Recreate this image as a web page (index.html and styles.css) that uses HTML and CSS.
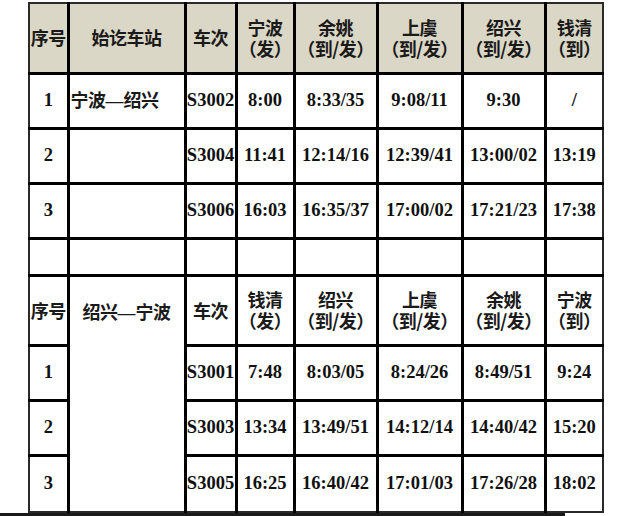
FILE: index.html
```html
<!DOCTYPE html>
<html lang="zh-CN">
<head>
<meta charset="utf-8">
<title>时刻表</title>
<link rel="stylesheet" href="styles.css">
</head>
<body>
<div class="page">
<table class="tt">
<colgroup>
<col class="c1"><col class="c2"><col class="c3"><col class="c4"><col class="c5"><col class="c6"><col class="c7"><col class="c8">
</colgroup>
<tbody>
<tr class="h hbg">
<td class="cn">序号</td><td class="cn">始讫车站</td><td class="cn">车次</td>
<td class="cn">宁波<br>（发）</td><td class="cn">余姚<br>（到/发）</td><td class="cn">上虞<br>（到/发）</td><td class="cn">绍兴<br>（到/发）</td><td class="cn">钱清<br>（到）</td>
</tr>
<tr class="r">
<td>1</td><td class="cn st">宁波<span class="dash">—</span>绍兴</td><td>S3002</td><td>8:00</td><td>8:33/35</td><td>9:08/11</td><td>9:30</td><td>/</td>
</tr>
<tr class="r">
<td>2</td><td></td><td>S3004</td><td>11:41</td><td>12:14/16</td><td>12:39/41</td><td>13:00/02</td><td>13:19</td>
</tr>
<tr class="r">
<td>3</td><td></td><td>S3006</td><td>16:03</td><td>16:35/37</td><td>17:00/02</td><td>17:21/23</td><td>17:38</td>
</tr>
<tr class="gap">
<td></td><td></td><td></td><td></td><td></td><td></td><td></td><td></td>
</tr>
<tr class="h">
<td class="cn">序号</td><td class="cn span" rowspan="4">绍兴<span class="dash">—</span>宁波</td><td class="cn">车次</td>
<td class="cn">钱清<br>（发）</td><td class="cn">绍兴<br>（到/发）</td><td class="cn">上虞<br>（到/发）</td><td class="cn">余姚<br>（到/发）</td><td class="cn">宁波<br>（到）</td>
</tr>
<tr class="r">
<td>1</td><td>S3001</td><td>7:48</td><td>8:03/05</td><td>8:24/26</td><td>8:49/51</td><td>9:24</td>
</tr>
<tr class="r">
<td>2</td><td>S3003</td><td>13:34</td><td>13:49/51</td><td>14:12/14</td><td>14:40/42</td><td>15:20</td>
</tr>
<tr class="r last">
<td>3</td><td>S3005</td><td>16:25</td><td>16:40/42</td><td>17:01/03</td><td>17:26/28</td><td>18:02</td>
</tr>
</tbody>
</table>
<div class="scanline"></div>
</div>
</body>
</html>
```
FILE: styles.css
```css
html, body {
  margin: 0;
  padding: 0;
  background: #ffffff;
}
.page {
  width: 640px;
  height: 516px;
  overflow: hidden;
  padding: 2px 0 0 28px;
  box-sizing: border-box;
  position: relative;
}
.tt {
  border-collapse: collapse;
  table-layout: fixed;
  width: 576px;
  border: 2px solid #2a2a2a;
  font-family: "Liberation Serif", "Times New Roman", serif;
  font-weight: bold;
  font-size: 18.5px;
  color: #111;
}
.c1 { width: 39px; }
.c2 { width: 117px; }
.c3 { width: 51px; }
.c4 { width: 58px; }
.c5 { width: 83px; }
.c6 { width: 85px; }
.c7 { width: 83px; }
.c8 { width: 58px; }
.tt td {
  border: 3px solid #000;
  padding: 0;
  text-align: center;
  vertical-align: middle;
  white-space: nowrap;
  overflow: visible;
}
.tt tr:first-child td { border-top: none; }
.tt td:first-child { border-left: none; }
.tt td:last-child { border-right: none; }
.tt tr.last td, .tt td.span { border-bottom: none; }
.h { height: 70px; }
.r { height: 55px; }
.r.last { height: 57px; }
.gap { height: 37px; }
.hbg td { background: #dad7c6; }
.cn {
  font-family: "Noto Sans CJK SC", "Noto Sans", sans-serif;
  font-weight: 700;
  font-size: 18px;
  line-height: 21px;
  letter-spacing: -0.5px;
  color: #1a1a1a;
}
.dash {
  font-family: "Liberation Sans", Arial, sans-serif;
  font-weight: 400;
  letter-spacing: 0;
}
.st {
  text-align: left !important;
  padding-left: 1px !important;
}
.span {
  vertical-align: top !important;
  padding-top: 24px !important;
}
.scanline {
  width: 565px;
  height: 3px;
  background: #1a1a1a;
  position: absolute;
  left: 0;
  top: 513px;
}
```
